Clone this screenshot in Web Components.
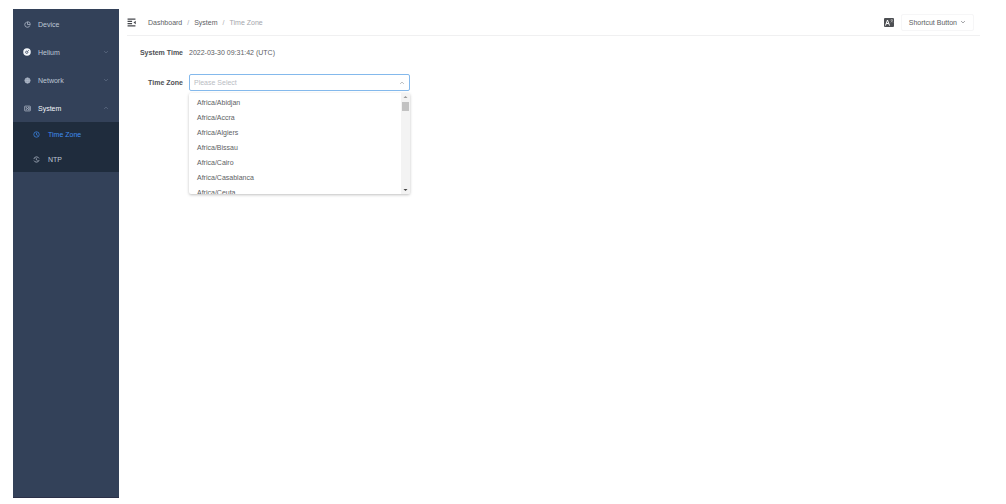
<!DOCTYPE html>
<html lang="en">
<head>
<meta charset="utf-8">
<title>System - Time Zone</title>
<style>
  html, body { height: 100%; margin: 0; }
  body { background: #fff; color: #5c5e63; font: 7px/15px "Liberation Sans", Arial, sans-serif; }
</style>
</head>
<body>
<admin-shell>
  <side-nav slot="nav">
    <nav-item icon="device">Device</nav-item>
    <nav-item icon="helium" arrow="down">Helium</nav-item>
    <nav-item icon="network" arrow="down">Network</nav-item>
    <nav-item icon="system" arrow="up" active>System
      <sub-item slot="sub" icon="clock" current>Time Zone</sub-item>
      <sub-item slot="sub" icon="sync">NTP</sub-item>
    </nav-item>
  </side-nav>
  <top-bar slot="top"></top-bar>
  <time-form></time-form>
</admin-shell>

<script>
const svg = (body, size = 8) =>
  `<svg width="${size}" height="${size}" viewBox="0 0 16 16" fill="none" stroke="currentColor" stroke-width="1.6" aria-hidden="true">${body}</svg>`;
const ICONS = {
  device: svg('<path d="M6.5 2.500A6 6 0 1 0 13.500 10"/><path d="M8 8V1.500A6.500 6.500 0 0 1 14.500 8z"/>', 7),
  helium: svg('<circle cx="8" cy="8" r="7.500" fill="#f4f7fb" stroke="none"/><circle cx="7.500" cy="8.500" r="2.300" stroke="#33415a"/><path d="M9.500 6.500 11.500 4.500" stroke="#33415a"/>', 8),
  network: svg('<circle cx="8" cy="8" r="6" fill="#8793a8"/><path d="M2 8h12M8 2v12M8 2c-4 3-4 9 0 12M8 2c4 3 4 9 0 12" stroke-width="1"/>', 7),
  system: svg('<rect x="1.500" y="2.500" width="13" height="11" rx="1"/><path d="M4 6h3M4 10h3M9 5.500h3v5H9M6 8h4"/>', 7),
  clock: svg('<circle cx="8" cy="8" r="6.200"/><path d="M8 4v4.500l3 1.500"/>', 7),
  sync: svg('<path d="M13.700 5.500A6.200 6.200 0 0 0 2 7M2.300 10.500A6.200 6.200 0 0 0 14 9"/><path d="M7.500 5v3.500l3 1.500"/>', 7),
  down: svg('<path d="m3 5.500 5 5 5-5"/>', 6),
  up: svg('<path d="m3 10.500 5-5 5 5"/>', 6),
  fold: svg('<path d="M1 2h14M1 6h8M1 10h8M1 14h14" stroke-width="1.800"/><path d="m15.500 5-4 3 4 3z" fill="currentColor" stroke="none"/>', 9),
  lang: '<svg width="10" height="9" viewBox="0 0 20 18" fill="none" stroke="#fff" stroke-width="2" aria-hidden="true"><path d="m3 15 4-11 4 11M4.500 11h5"/><path d="M13 4h5M15.500 2v2M13.500 9l4-5M14 5l4 4" stroke-width="1" stroke="#ccc"/></svg>'
};
const define = (name, render) => customElements.define(name, class extends HTMLElement {
  constructor() { super(); this.attachShadow({ mode: 'open' }); }
  connectedCallback() { this.shadowRoot.innerHTML = render(this); }
});

define('admin-shell', () => `
  <style>
    :host { display: grid; grid-template-columns: 106px 1fr; box-sizing: border-box; min-height: 100%; padding: 9px 26px 6px 13px; }
    .page { display: flex; flex-direction: column; min-width: 0; padding-left: 8px; }
  </style>
  <slot name="nav"></slot>
  <div class="page"><slot name="top"></slot><main><slot></slot></main></div>`);

define('side-nav', () => `
  <style>
    :host { display: block; background: #334159; border-bottom: 1px solid #2b3048; }
    nav { padding-top: 1px; }
  </style>
  <nav aria-label="Main"><slot></slot></nav>`);

define('nav-item', el => `
  <style>
    :host { display: block; color: #bdc6d4; }
    :host([active]) { color: #f2f5f9; }
    a { display: grid; grid-template-columns: 8px 1fr 6px; column-gap: 7px; align-items: center; height: 28px; padding: 0 10px; color: inherit; text-decoration: none; }
    .icon { display: flex; justify-content: center; color: #bdc6d4; }
    .arrow { display: flex; color: #6c7990; }
    .sub { background: #1f2c3d; }
  </style>
  <a href="#"><span class="icon">${ICONS[el.getAttribute('icon')]}</span><span><slot></slot></span><span class="arrow">${ICONS[el.getAttribute('arrow')] || ''}</span></a>
  <div class="sub"><slot name="sub"></slot></div>`);

define('sub-item', el => `
  <style>
    :host { display: block; color: #bdc6d4; }
    :host([current]) { color: #3f8cf0; }
    a { display: flex; align-items: center; gap: 8px; height: 25px; padding-left: 20px; color: inherit; text-decoration: none; }
  </style>
  <a href="#">${ICONS[el.getAttribute('icon')]}<slot></slot></a>`);

define('top-bar', () => `
  <style>
    :host { display: flex; align-items: center; height: 26px; border-bottom: 1px solid #f0f0f1; }
    button { font: inherit; color: inherit; background: none; border: 0; padding: 0; display: flex; align-items: center; }
    .fold { color: #45474c; }
    nav { margin: 0 auto 0 12px; }
    ol { display: flex; gap: 5px; margin: 0; padding: 0; list-style: none; }
    li { display: flex; gap: 5px; }
    li + li::before { content: "/"; color: #a9abb0; }
    a { color: inherit; text-decoration: none; }
    .last { color: #a4a6ab; }
    .lang { justify-content: center; width: 10px; height: 9px; background: #4d4f53; border-radius: 1px; }
    .short { gap: 3px; height: 17px; margin: 0 6px 0 7px; padding: 0 7px; border: 1px solid #f6f6f7; border-radius: 2px; }
  </style>
  <button class="fold" type="button" aria-label="Collapse menu">${ICONS.fold}</button>
  <nav aria-label="Breadcrumb"><ol><li><a href="#">Dashboard</a></li><li><a href="#">System</a></li><li class="last">Time Zone</li></ol></nav>
  <button class="lang" type="button" aria-label="Language">${ICONS.lang}</button>
  <button class="short" type="button">Shortcut Button ${ICONS.down}</button>`);

const ZONES = ['Abidjan', 'Accra', 'Algiers', 'Bissau', 'Cairo', 'Casablanca', 'Ceuta'];
define('zone-picker', () => `
  <style>
    :host { display: block; position: relative; width: 221px; }
    select { display: block; box-sizing: border-box; width: 100%; height: 17px; padding: 0 4px; font: inherit; line-height: 15px; color: #b9bcc3; background: #fff; border: 1px solid #84b9ec; border-radius: 2px; outline: 0; appearance: none; }
    .mark { position: absolute; right: 5px; top: 6px; display: flex; color: #8b8e94; }
    .menu { position: absolute; top: 19px; left: 0; right: 0; display: flex; height: 101px; overflow: hidden; background: #fff; border-radius: 2px; box-shadow: 0 1px 3px rgba(0, 0, 0, .25); }
    ul { flex: 1; margin: 0; padding: 2px 0 0 8px; list-style: none; }
    li { line-height: 15px; }
    .bar { display: flex; flex-direction: column; align-items: center; width: 9px; background: #f3f3f3; }
    .bar i { width: 7px; height: 9px; margin: 1px 0 auto; background: #c2c2c2; }
    .bar svg { margin: 2px 0; }
  </style>
  <select id="zone" aria-label="Time Zone"><option>Please Select</option></select>
  <span class="mark">${ICONS.up}</span>
  <div class="menu">
    <ul role="listbox" aria-label="Time Zone">${ZONES.map(z => `<li role="option">Africa/${z}</li>`).join('')}</ul>
    <div class="bar" aria-hidden="true">
      <svg width="5" height="4" viewBox="0 0 10 8"><path d="M1 6h8L5 2z" fill="#999"/></svg><i></i>
      <svg width="5" height="4" viewBox="0 0 10 8"><path d="M1 2h8L5 6z" fill="#444"/></svg>
    </div>
  </div>`);

define('time-form', () => `
  <style>
    :host { display: block; padding-top: 8px; }
    dl { display: grid; grid-template-columns: 56px 1fr; column-gap: 6px; row-gap: 13px; align-items: center; margin: 0; }
    dt, dd { margin: 0; line-height: 17px; }
    dt { text-align: right; font-weight: bold; color: #4e5054; }
  </style>
  <dl>
    <dt>System Time</dt><dd>2022-03-30 09:31:42 (UTC)</dd>
    <dt>Time Zone</dt><dd><zone-picker></zone-picker></dd>
  </dl>`);
</script>
</body>
</html>
